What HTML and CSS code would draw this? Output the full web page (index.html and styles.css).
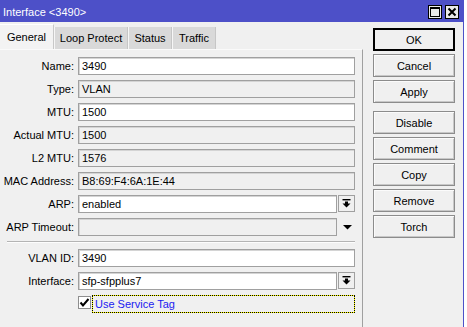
FILE: index.html
```html
<!doctype html>
<html>
    <head>
        <meta charset="utf-8"/>
        <title>Interface &lt;3490&gt;</title>
        <link rel="stylesheet" href="styles.css">
    </head>
    <body>
        <div class="window">
            <div class="titlebar">
                <span class="title">Interface &lt;3490&gt;</span>
                <div class="win-btns">
                    <span class="win-btn">
                        <svg width="10" height="10" viewBox="0 0 10 10">
                            <rect x="0.5" y="0.5" width="9" height="9" fill="none" stroke="#000"/>
                            <rect x="0" y="0" width="10" height="2" fill="#000"/>
                        </svg>
                    </span>
                    <span class="win-btn">
                        <svg width="10" height="10" viewBox="0 0 10 10">
                            <path d="M1.5 1.5 L8.5 8.5 M8.5 1.5 L1.5 8.5" stroke="#000" stroke-width="2"/>
                        </svg>
                    </span>
                </div>
            </div>
            <div class="main">
                <div class="left">
                    <div class="tabs">
                        <div class="tab active tab-general">General</div>
                        <div class="tab tab-loop">Loop Protect</div>
                        <div class="tab tab-status">Status</div>
                        <div class="tab tab-traffic">Traffic</div>
                    </div>
                    <div class="panel">
                        <div class="row">
                            <span class="lbl">Name:</span>
                            <div class="field edit">3490</div>
                        </div>
                        <div class="row">
                            <span class="lbl">Type:</span>
                            <div class="field">VLAN</div>
                        </div>
                        <div class="row">
                            <span class="lbl">MTU:</span>
                            <div class="field edit">1500</div>
                        </div>
                        <div class="row">
                            <span class="lbl">Actual MTU:</span>
                            <div class="field">1500</div>
                        </div>
                        <div class="row">
                            <span class="lbl">L2 MTU:</span>
                            <div class="field">1576</div>
                        </div>
                        <div class="row">
                            <span class="lbl">MAC Address:</span>
                            <div class="field">B8:69:F4:6A:1E:44</div>
                        </div>
                        <div class="row">
                            <span class="lbl">ARP:</span>
                            <div class="field edit">enabled</div>
                            <span class="drop-btn">
                                <svg width="9" height="9" viewBox="0 0 9 9">
                                    <rect x="0.5" y="0" width="8" height="1.4" fill="#000"/>
                                    <rect x="3" y="2.5" width="3" height="2.5" fill="#000"/>
                                    <polygon points="0.5,4.5 8.5,4.5 4.5,8.5" fill="#000"/>
                                </svg>
                            </span>
                        </div>
                        <div class="row">
                            <span class="lbl">ARP Timeout:</span>
                            <div class="field"></div>
                            <span class="drop-arrow">
                                <svg width="9" height="5" viewBox="0 0 9 5">
                                    <polygon points="0,0 9,0 4.5,4.5" fill="#000"/>
                                </svg>
                            </span>
                        </div>
                        <div class="sep"></div>
                        <div class="row">
                            <span class="lbl">VLAN ID:</span>
                            <div class="field edit">3490</div>
                        </div>
                        <div class="row">
                            <span class="lbl">Interface:</span>
                            <div class="field edit">sfp-sfpplus7</div>
                            <span class="drop-btn">
                                <svg width="9" height="9" viewBox="0 0 9 9">
                                    <rect x="0.5" y="0" width="8" height="1.4" fill="#000"/>
                                    <rect x="3" y="2.5" width="3" height="2.5" fill="#000"/>
                                    <polygon points="0.5,4.5 8.5,4.5 4.5,8.5" fill="#000"/>
                                </svg>
                            </span>
                        </div>
                        <div class="row check-row">
                            <span class="checkbox">
                                <svg width="11" height="11" viewBox="0 0 11 11">
                                    <path d="M1.5 5.5 L4 8.5 L9.5 2" fill="none" stroke="#000" stroke-width="2"/>
                                </svg>
                            </span>
                            <div class="focus">
                                <span class="focus-inner">Use Service Tag</span>
                            </div>
                        </div>
                    </div>
                </div>
                <div class="buttons">
                    <div class="btn default">OK</div>
                    <div class="btn">Cancel</div>
                    <div class="btn">Apply</div>
                    <div class="btn group">Disable</div>
                    <div class="btn">Comment</div>
                    <div class="btn">Copy</div>
                    <div class="btn">Remove</div>
                    <div class="btn">Torch</div>
                </div>
            </div>
        </div>
    </body>
</html>
```

FILE: styles.css
```css
* {
    margin: 0;
    padding: 0;
    box-sizing: border-box;
}
body {
    background-color: #fff;
    font-family: "Liberation Sans", Arial, sans-serif;
    font-size: 11px;
    color: #000;
}
.window {
    width: 464px;
    height: 327px;
    border-right: 1px solid #4d50c8;
    background-color: #f0f0f0;
    display: flex;
    flex-direction: column;
}
.titlebar {
    height: 22px;
    background-color: #4d50c8;
    color: #fff;
    display: flex;
    align-items: center;
    justify-content: space-between;
    padding: 1px 4px 0 3px;
}
.win-btns {
    display: flex;
    gap: 3px;
}
.win-btn {
    width: 14px;
    height: 14px;
    border: 1px solid #000;
    background-color: #eaeaea;
    display: flex;
    align-items: center;
    justify-content: center;
}
.main {
    flex: 1;
    display: flex;
}
.left {
    width: 363px;
    display: flex;
    flex-direction: column;
}
.tabs {
    height: 27px;
    display: flex;
    align-items: flex-end;
}
.tab {
    height: 22px;
    background-color: #d9d9d9;
    border-left: 1px solid #f6f6f6;
    border-right: 1px solid #c6c6c6;
    display: flex;
    align-items: center;
    justify-content: center;
}
.tab.active {
    height: 25px;
    background-color: #f3f3f3;
    border-left: none;
    border-top: 1px solid #fff;
    border-right: 1px solid #c8c8c8;
}
.tab-general { width: 54px; }
.tab-loop { width: 74px; }
.tab-status { width: 44px; }
.tab-traffic { width: 44px; }
.panel {
    flex: 1;
    border-top: 1px solid #fafafa;
    border-right: 1px solid #a0a0a0;
    padding: 7px 7px 0 0;
}
.row {
    display: flex;
    align-items: flex-start;
    height: 18px;
    margin-bottom: 5px;
}
.lbl {
    width: 74px;
    margin-right: 4px;
    text-align: right;
    line-height: 18px;
}
.field {
    flex: 1;
    height: 18px;
    border: 1px solid #a0a0a0;
    box-shadow: inset 1px 1px 0 #d4d4d4;
    background-color: #f0f0f0;
    padding: 0 3px;
    line-height: 16px;
}
.field.edit {
    background-color: #fff;
}
.drop-btn {
    width: 17px;
    height: 17px;
    margin-left: 1px;
    border: 1px solid #a0a0a0;
    background-color: #f0f0f0;
    display: flex;
    align-items: center;
    justify-content: center;
}
.drop-arrow {
    width: 18px;
    height: 18px;
    display: flex;
    align-items: center;
    justify-content: center;
    padding-left: 2px;
}
.sep {
    height: 2px;
    margin: 0 0 6px 7px;
    border-top: 1px solid #b4b4b4;
    border-bottom: 1px solid #fdfdfd;
}
.check-row {
    padding-left: 78px;
}
.checkbox {
    width: 13px;
    height: 13px;
    margin-top: 1px;
    border: 1px solid #8e8e8e;
    background-color: #fff;
    display: flex;
    align-items: center;
    justify-content: center;
}
.focus {
    flex: 1;
    height: 18px;
    margin-left: 1px;
    border: 1px dotted #000;
    background-color: #ffff00;
    display: flex;
}
.focus-inner {
    flex: 1;
    background-color: #f0f0f0;
    color: #2020f0;
    padding-left: 2px;
    line-height: 16px;
}
.buttons {
    width: 82px;
    margin-left: 10px;
    padding-top: 6px;
    display: flex;
    flex-direction: column;
    gap: 3px;
}
.btn {
    height: 23px;
    border: 1px solid #8c8c8c;
    box-shadow: inset 1px 1px 0 #fbfbfb, inset -1px -1px 0 #c8c8c8;
    background-color: #f0f0f0;
    display: flex;
    align-items: center;
    justify-content: center;
}
.btn.default {
    border: 1px solid #000;
    box-shadow: inset 0 0 0 1px #000;
}
.btn.group {
    margin-top: 5px;
}
```
